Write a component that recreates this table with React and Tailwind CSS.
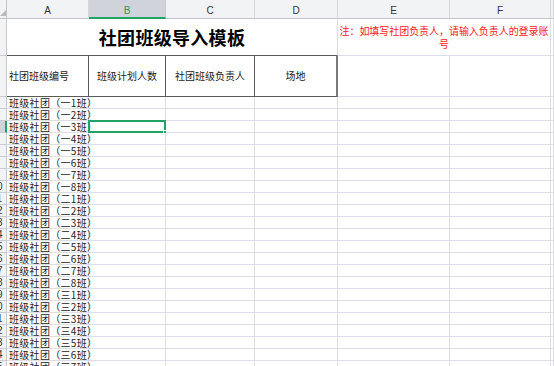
import React from "react";

const labels = [
  "一1","一2","一3","一4","一5","一6","一7","一8",
  "二1","二2","二3","二4","二5","二6","二7","二8",
  "三1","三2","三3","三4","三5","三6","三7",
];

function RowHead({ n, selected }) {
  return (
    <div
      className={
        "overflow-hidden border-b border-r text-[10px] leading-[11px] text-[#333] font-['Liberation_Sans',sans-serif] " +
        (selected
          ? "bg-[#d0d4da] border-b-[#c8cacf] border-r-2 border-r-[#21a366]"
          : "bg-[#f2f3f5] border-[#c8cacf]")
      }
    >
      <div className="w-[20px] ml-[-13px] text-center">{n}</div>
    </div>
  );
}

function ColHead({ letter, selected }) {
  return (
    <div
      className={
        "flex items-start justify-center pt-[5px] text-[10px] leading-[11px] font-['Liberation_Sans',sans-serif] border-r " +
        (selected
          ? "bg-[#d0d4da] text-[#1f9d63] border-r-[#c8cacf] border-b-2 border-b-[#21a366]"
          : "bg-[#f2f3f5] text-[#333] border-r-[#d6d8dc] border-b border-b-[#c2c4c8]")
      }
    >
      {letter}
    </div>
  );
}

export default function App() {
  const g = "border-b border-r border-[#dcdde8]";
  return (
    <div className="w-[554px] h-[366px] overflow-hidden bg-white font-['Noto_Sans_CJK_SC',sans-serif]">
      <div className="grid grid-cols-[7px_82px_77px_89px_83px_112px_101px_3px] grid-rows-[19px_37px_41px_repeat(23,12px)]">
        {/* column header */}
        <div className="relative bg-[#f2f3f5] border-r border-b border-[#c2c4c8]">
          <svg className="absolute left-0 top-[10px]" width="6" height="6" viewBox="0 0 6 6">
            <polygon points="6,0 6,6 0,6" fill="#b8bbc0" />
          </svg>
        </div>
        <ColHead letter="A" />
        <ColHead letter="B" selected />
        <ColHead letter="C" />
        <ColHead letter="D" />
        <ColHead letter="E" />
        <ColHead letter="F" />
        <ColHead letter="" />

        {/* row 1: title */}
        <RowHead n={1} />
        <div className="col-span-4 flex items-center justify-center border-b border-b-[#5a5a5a] border-r border-r-[#dcdde8] text-[18px] leading-[22px] font-bold text-black tracking-[0.3px]">
          社团班级导入模板
        </div>
        <div className={"col-span-2 flex items-center justify-center text-center text-[10px] leading-[13px] tracking-[-0.05px] text-[#ff2020] " + g}>
          <span className="block w-[212px]">注：如填写社团负责人，请输入负责人的登录账号</span>
        </div>
        <div className={g}></div>

        {/* row 2: headers */}
        <RowHead n={2} />
        <div className="flex items-center pl-[2px] border-b border-r border-[#5a5a5a] text-[10px] leading-[12px] text-[#222]">
          社团班级编号
        </div>
        <div className="flex items-center justify-center border-b border-r border-[#5a5a5a] text-[10px] leading-[12px] text-[#222]">
          班级计划人数
        </div>
        <div className="flex items-center justify-center border-b border-r border-[#5a5a5a] text-[10px] leading-[12px] text-[#222]">
          社团班级负责人
        </div>
        <div className="flex items-center justify-center border-b border-b-[#5a5a5a] border-r-2 border-r-[#7a7a7a] text-[10px] leading-[12px] text-[#222]">
          场地
        </div>
        <div className={g}></div>
        <div className={g}></div>
        <div className={g}></div>

        {/* data rows */}
        {labels.map((l, i) => (
          <React.Fragment key={l}>
            <RowHead n={i + 3} selected={i === 2} />
            <div className={"pl-[2px] whitespace-nowrap text-[10px] leading-[11px] tracking-[0.3px] text-[#222] " + g}>
              {"班级社团（" + l + "班）"}
            </div>
            <div className={"relative " + g}>
              {i === 2 && (
                <div className="absolute left-[-1px] top-[-1px] right-[-1px] bottom-[-1px] border-2 border-[#21a366]">
                  <div className="absolute right-[-3px] bottom-[-3px] w-[4px] h-[4px] bg-[#21a366] border border-white"></div>
                </div>
              )}
            </div>
            <div className={g}></div>
            <div className={g}></div>
            <div className={g}></div>
            <div className={g}></div>
            <div className={g}></div>
          </React.Fragment>
        ))}
      </div>
    </div>
  );
}
